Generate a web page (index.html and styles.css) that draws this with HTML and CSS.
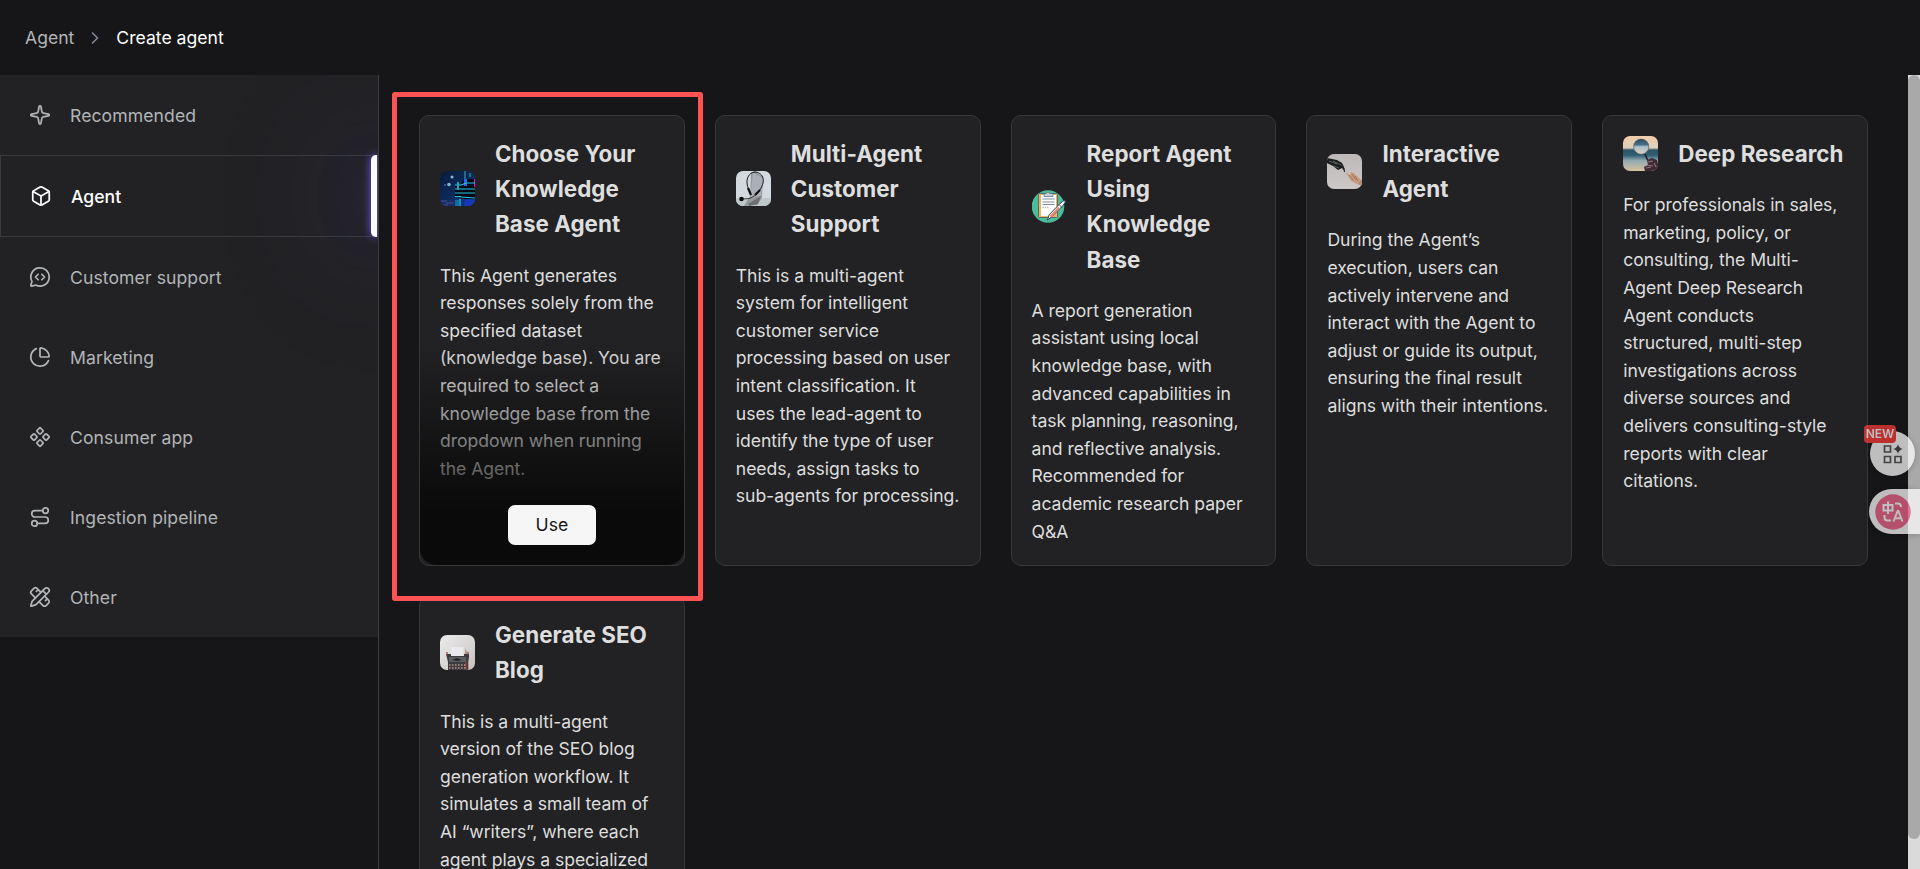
FILE: index.html
```
<!DOCTYPE html>
<html lang="en">
<head>
    <meta charset="UTF-8">
    <meta name="viewport" content="width=device-width, initial-scale=1.0">
    <title>Create agent</title>
    <link rel="stylesheet" href="styles.css">
</head>
<body>
    <header class="header">
        <a class="crumb">Agent</a>
        <svg class="chevron" viewBox="0 0 24 24"><path d="m9 18 6-6-6-6"/></svg>
        <span class="crumb current">Create agent</span>
    </header>

    <div class="page">
        <aside class="sidebar">
            <ul class="menu">
                <li class="menu-item">
                    <svg class="icon" viewBox="0 0 24 24"><path d="M11.017 2.814a1 1 0 0 1 1.966 0l1.051 5.558a2 2 0 0 0 1.594 1.594l5.558 1.051a1 1 0 0 1 0 1.966l-5.558 1.051a2 2 0 0 0-1.594 1.594l-1.051 5.558a1 1 0 0 1-1.966 0l-1.051-5.558a2 2 0 0 0-1.594-1.594l-5.558-1.051a1 1 0 0 1 0-1.966l5.558-1.051a2 2 0 0 0 1.594-1.594z"/></svg>
                    <span>Recommended</span>
                </li>
                <li class="menu-item active">
                    <svg class="icon" viewBox="0 0 24 24"><path d="M21 8a2 2 0 0 0-1-1.73l-7-4a2 2 0 0 0-2 0l-7 4A2 2 0 0 0 3 8v8a2 2 0 0 0 1 1.73l7 4a2 2 0 0 0 2 0l7-4A2 2 0 0 0 21 16Z"/><path d="m3.3 7 8.7 5 8.7-5"/><path d="M12 22V12"/></svg>
                    <span>Agent</span>
                </li>
                <li class="menu-item">
                    <svg class="icon" viewBox="0 0 24 24"><path d="m10 9-3 3 3 3"/><path d="m14 15 3-3-3-3"/><path d="M2.992 16.342a2 2 0 0 1 .094 1.167l-1.065 3.29a1 1 0 0 0 1.236 1.168l3.413-.998a2 2 0 0 1 1.099.092 10 10 0 1 0-4.777-4.719"/></svg>
                    <span>Customer support</span>
                </li>
                <li class="menu-item">
                    <svg class="icon" viewBox="0 0 24 24"><path d="M21 12c.552 0 1.005-.449.95-.998a10 10 0 0 0-8.953-8.951c-.55-.055-.998.398-.998.95v8a1 1 0 0 0 1 1z"/><path d="M21.21 15.89A10 10 0 1 1 8 2.83"/></svg>
                    <span>Marketing</span>
                </li>
                <li class="menu-item">
                    <svg class="icon" viewBox="0 0 24 24"><path d="M15.536 11.293a1 1 0 0 0 0 1.414l2.376 2.377a1 1 0 0 0 1.414 0l2.377-2.377a1 1 0 0 0 0-1.414l-2.377-2.377a1 1 0 0 0-1.414 0z"/><path d="M2.297 11.293a1 1 0 0 0 0 1.414l2.377 2.377a1 1 0 0 0 1.414 0l2.377-2.377a1 1 0 0 0 0-1.414L6.088 8.916a1 1 0 0 0-1.414 0z"/><path d="M8.916 17.912a1 1 0 0 0 0 1.415l2.377 2.376a1 1 0 0 0 1.414 0l2.377-2.376a1 1 0 0 0 0-1.415l-2.377-2.376a1 1 0 0 0-1.414 0z"/><path d="M8.916 4.674a1 1 0 0 0 0 1.414l2.377 2.376a1 1 0 0 0 1.414 0l2.377-2.376a1 1 0 0 0 0-1.414l-2.377-2.377a1 1 0 0 0-1.414 0z"/></svg>
                    <span>Consumer app</span>
                </li>
                <li class="menu-item">
                    <svg class="icon" viewBox="0 0 24 24"><circle cx="6" cy="19" r="3"/><path d="M9 19h8.500a3.500 3.500 0 0 0 0-7h-11a3.500 3.500 0 0 1 0-7H15"/><circle cx="18" cy="5" r="3"/></svg>
                    <span>Ingestion pipeline</span>
                </li>
                <li class="menu-item">
                    <svg class="icon" viewBox="0 0 24 24"><path d="M13 7 8.700 2.700a2.410 2.410 0 0 0-3.400 0L2.700 5.300a2.410 2.410 0 0 0 0 3.400L7 13"/><path d="m8 6 2-2"/><path d="m18 16 2-2"/><path d="m17 11 4.300 4.300c.94.94.94 2.460 0 3.400l-2.600 2.600c-.94.94-2.460.94-3.400 0L11 17"/><path d="M21.174 6.812a1 1 0 0 0-3.986-3.987L3.842 16.174a2 2 0 0 0-.5.830l-1.321 4.352a.5.5 0 0 0 .623.622l4.353-1.320a2 2 0 0 0 .830-.497z"/><path d="m15 5 4 4"/></svg>
                    <span>Other</span>
                </li>
            </ul>
        </aside>

        <main class="content">
            <div class="cards">
                <article class="card">
                    <div class="card-head">
                        <svg class="thumb" viewBox="0 0 35 35">
                            <defs>
                                <linearGradient id="night" x1="0" y1="0" x2="1" y2="1"><stop offset="0" stop-color="#0b1a38"/><stop offset=".5" stop-color="#0b2a58"/><stop offset="1" stop-color="#0a3f9c"/></linearGradient>
                            </defs>
                            <rect width="35" height="35" fill="url(#night)"/>
                            <path d="M24 0h2v8h-2zM29 2h2v4h-2z" fill="#1b6f86"/>
                            <circle cx="12" cy="6" r="1.500" fill="#8fb8d8"/>
                            <circle cx="9" cy="13.500" r="1.800" fill="#7fb3cf"/>
                            <circle cx="5" cy="14" r="1" fill="#3a6f9c"/>
                            <path d="M0 29h15v6H0z" fill="#1a2d62"/>
                            <path d="M1 30h6M6 32h8M2 34h6" stroke="#4a62a0" stroke-width=".7"/>
                            <path d="M15 14h7v12h-7zM21 12l4-4h10v20H21z" fill="#030817"/>
                            <path d="M24 8h3v7h-3z" fill="#2d62f0"/>
                            <path d="M34 8h1v8h-1z" fill="#f012c8"/>
                            <path d="M15 14h6M15 18h7M15 22h20M15 25.500h6M21 14l5-2h9M21 18h14M21 26l14 1" stroke="#22c9dc" stroke-width="1.100" fill="none"/>
                            <path d="M18 11v8M20 28v7" stroke="#1ba4c8" stroke-width="2"/>
                            <path d="M15 29h6v6h-6z" fill="#1483ad" opacity=".7"/>
                            <path d="M25 28l10 1v6H24z" fill="#1637b8"/>
                        </svg>
                        <h2 class="card-title">Choose Your Knowledge Base Agent</h2>
                    </div>
                    <p class="card-text">This Agent generates responses solely from the specified dataset (knowledge base). You are required to select a knowledge base from the dropdown when running the Agent.</p>
                    <div class="card-overlay">
                        <button class="use-btn" type="button">Use</button>
                    </div>
                    <div class="highlight"></div>
                </article>

                <article class="card">
                    <div class="card-head">
                        <svg class="thumb" viewBox="0 0 35 35">
                            <rect width="35" height="35" fill="#d3dadf"/>
                            <path d="M0 27h35v8H0z" fill="#bec8c9"/>
                            <path d="M15 2l4-2 8 6-1 21-5 7-13 1 6-10z" fill="#96999c"/>
                            <path d="M17 2l10 5-2 18-11 1z" fill="#aab0b4"/>
                            <path d="M12 33l13-8-3 8-9 2z" fill="#6d7072"/>
                            <path d="M13 19C8 9 13 1 19 1s13 7 4 19l-3 4" stroke="#17191b" stroke-width="1" fill="none"/>
                            <path d="M12 17l3 7M24 19l-5 5" stroke="#111" stroke-width="2.200"/>
                            <path d="M6 28q8 1 14-4" stroke="#222" stroke-width=".8" fill="none"/>
                            <circle cx="5.500" cy="28" r="2.300" fill="#0b0b0c"/>
                        </svg>
                        <h2 class="card-title">Multi-Agent Customer Support</h2>
                    </div>
                    <p class="card-text">This is a multi-agent system for intelligent customer service processing based on user intent classification. It uses the lead-agent to identify the type of user needs, assign tasks to sub-agents for processing.</p>
                </article>

                <article class="card">
                    <div class="card-head">
                        <svg class="thumb plain" viewBox="0 0 35 35">
                            <circle cx="16" cy="17.500" r="16.300" fill="#4dba9a"/>
                            <rect x="6.500" y="4.500" width="19" height="24" rx="1" fill="#f0b35c" stroke="#40586b" stroke-width=".8"/>
                            <path d="M9 6h15v16l-5 5H9z" fill="#fff"/>
                            <path d="M12 4.500h2q2-3 4 0h3v3h-9z" fill="#c5cfdc" stroke="#40586b" stroke-width=".6"/>
                            <path d="M10.500 10h12M10.500 13h12M10.500 15.500h12" stroke="#7c8ea3" stroke-width="1.200"/>
                            <path d="M10.500 18.500h6" stroke="#aab5c2" stroke-width="1.500" stroke-dasharray="1.300 1"/>
                            <path d="M15.500 31l1.500-5L28 14.500l4-3 1.500 1.300-3 4.200L19.500 28z" fill="#fff" stroke="#304b62" stroke-width="1"/>
                            <path d="M18.500 27.500L27 18.500" stroke="#f5816c" stroke-width="2.200"/>
                            <path d="M27 15.500l3 3" stroke="#304b62" stroke-width="1"/>
                        </svg>
                        <h2 class="card-title">Report Agent Using Knowledge Base</h2>
                    </div>
                    <p class="card-text">A report generation assistant using local knowledge base, with advanced capabilities in task planning, reasoning, and reflective analysis. Recommended for academic research paper Q&amp;A</p>
                </article>

                <article class="card">
                    <div class="card-head">
                        <svg class="thumb" viewBox="0 0 35 35">
                            <defs>
                                <linearGradient id="wall" x1="0" y1="0" x2="0" y2="1"><stop offset="0" stop-color="#bdb9b8"/><stop offset="1" stop-color="#cbc8c7"/></linearGradient>
                            </defs>
                            <rect width="35" height="35" fill="url(#wall)"/>
                            <path d="M0 4l10 2 5 3 2 4 1 5-3-4-4 2-5-4-6-3z" fill="#1a1d1e"/>
                            <path d="M2 7l8 3M6 7l8 4M7 12l5 2" stroke="#8b8f8f" stroke-width=".6"/>
                            <path d="M14 11q4 3 3.500 7" stroke="#252829" stroke-width="1" fill="none"/>
                            <path d="M18 18l5 3 1-3 3 1 4 4 4 4v5l-5-2-6-3-3-5z" fill="#c99a80"/>
                            <path d="M22 21l4 5M25 20l4 6M28 22l3 5" stroke="#8d5f4c" stroke-width=".6"/>
                            <path d="M31 30l4-5v7z" fill="#b08c76"/>
                        </svg>
                        <h2 class="card-title">Interactive Agent</h2>
                    </div>
                    <p class="card-text">During the Agent’s execution, users can actively intervene and interact with the Agent to adjust or guide its output, ensuring the final result aligns with their intentions.</p>
                </article>

                <article class="card">
                    <div class="card-head">
                        <svg class="thumb" viewBox="0 0 35 35">
                            <defs>
                                <linearGradient id="lake" x1="0" y1="0" x2="0" y2="1"><stop offset="0" stop-color="#f0cdaa"/><stop offset=".34" stop-color="#dccfbd"/><stop offset=".4" stop-color="#2d5366"/><stop offset=".55" stop-color="#315e73"/><stop offset=".7" stop-color="#8fa8b0"/><stop offset="1" stop-color="#d8c3a0"/></linearGradient>
                                <linearGradient id="lens" x1="0" y1="0" x2="0" y2="1"><stop offset="0" stop-color="#294b62"/><stop offset=".38" stop-color="#49718a"/><stop offset=".5" stop-color="#a9bfca"/><stop offset="1" stop-color="#ddd0c0"/></linearGradient>
                            </defs>
                            <rect width="35" height="35" fill="url(#lake)"/>
                            <circle cx="18.200" cy="10.700" r="7.600" fill="url(#lens)" stroke="#41535e" stroke-width=".6"/>
                            <path d="M22 18l2.500 6" stroke="#1c1f28" stroke-width="1.600"/>
                            <path d="M24 24l5-2 5 2 1 4v7H22l-1-4 4-2z" fill="#3e2a35"/>
                            <path d="M25 26l5-1M24 29l6 1M23 32l5-1M31 27l2 4" stroke="#94707b" stroke-width="1.100"/>
                        </svg>
                        <h2 class="card-title">Deep Research</h2>
                    </div>
                    <p class="card-text">For professionals in sales, marketing, policy, or consulting, the Multi-Agent Deep Research Agent conducts structured, multi-step investigations across diverse sources and delivers consulting-style reports with clear citations.</p>
                </article>

                <article class="card">
                    <div class="card-head">
                        <svg class="thumb" viewBox="0 0 35 35">
                            <defs>
                                <linearGradient id="desk" x1="0" y1="0" x2="1" y2="1"><stop offset="0" stop-color="#ececec"/><stop offset=".6" stop-color="#d6d3d2"/><stop offset="1" stop-color="#c9bfbb"/></linearGradient>
                            </defs>
                            <rect width="35" height="35" fill="url(#desk)"/>
                            <path d="M25 14q4 3 4 21h-3z" fill="#a5958f"/>
                            <path d="M10.500 12h13v9h-13z" fill="#e9e9ef"/>
                            <path d="M6 19h5v2h13v-2h5v3l-1 5v8H8v-8z" fill="#3c3d40"/>
                            <path d="M9 22h17v5H9z" fill="#5c5d60"/>
                            <path d="M12 25l5-2 5 2-5 1z" fill="#232427"/>
                            <path d="M7 17v3M28 17v3M26 27v8" stroke="#9b4038" stroke-width="1.200"/>
                            <path d="M9 30h17M9 33h17" stroke="#c58f80" stroke-width="1.600" stroke-dasharray="1.500 1.500"/>
                        </svg>
                        <h2 class="card-title">Generate SEO Blog</h2>
                    </div>
                    <p class="card-text">This is a multi-agent version of the SEO blog generation workflow. It simulates a small team of AI “writers”, where each agent plays a specialized</p>
                </article>
            </div>
        </main>

        <div class="scrollbar"><div class="scrollbar-thumb"></div></div>
    </div>

    <!-- Floating tools on the right edge -->
    <div class="float-tools">
        <div class="tool round">
            <span class="badge">NEW</span>
            <svg class="tool-icon" viewBox="0 0 20 20"><path d="M1.500 2h6v6h-6zM1.500 12.500h6v6h-6zM12 12.500h6v6h-6z" fill="none" stroke="#555" stroke-width="1.700"/><path d="M15 0q.8 4.200 5 5-4.200.8-5 5-.8-4.200-5-5 4.200-.8 5-5z" fill="#444"/></svg>
        </div>
        <div class="tool pill">
            <svg class="translate" viewBox="0 0 36 36"><circle cx="18" cy="18" r="17.700" fill="#f2668e"/><g fill="none" stroke="#fff" stroke-width="2"><path d="M8.500 11h9v5.500h-9zM13 7.500v12.500M20 9.500h3q3 0 3 3.500M9.500 21v2.500q0 3 3 3H16"/><path d="M18.500 27.500l4.200-10.500h.6l4.200 10.500M20 24.300h6"/></g></svg>
        </div>
    </div>
</body>
</html>
```
FILE: styles.css
```
* {
    margin: 0;
    padding: 0;
    box-sizing: border-box;
}

body {
    height: 100vh;
    display: flex;
    flex-direction: column;
    overflow: hidden;
    background-color: #161618;
    color: #dedede;
    font-family: Inter, sans-serif;
    font-size: 17.6px;
}

.header {
    display: flex;
    flex: none;
    align-items: center;
    height: 75px;
    padding-left: 25px;
    gap: 11px;
}

.crumb {
    color: #b2b5b7;
}

.crumb.current {
    color: #fff;
}

.chevron {
    width: 20px;
    height: 20px;
    fill: none;
    stroke: #7f8795;
    stroke-width: 2;
    stroke-linecap: round;
    stroke-linejoin: round;
}

.page {
    display: flex;
    flex: 1;
    min-height: 0;
}

.sidebar {
    flex: none;
    width: 379px;
    border-right: 1px solid #3d3d40;
}

.menu {
    list-style: none;
    background-color: #222224;
    overflow: hidden;
}

.menu-item {
    display: flex;
    align-items: center;
    height: 80px;
    padding-left: 29px;
    gap: 19px;
    color: #b2b5b7;
    letter-spacing: 0.08px;
}

.menu-item.active {
    position: relative;
    height: 82px;
    border: 1px solid #3b3b3e;
    color: #fff;
    font-weight: 500;
    letter-spacing: 0;
}

/* glowing bar of the selected item */
.menu-item.active::after {
    content: "";
    position: absolute;
    top: -1px;
    right: 0;
    width: 6px;
    height: 82px;
    border-radius: 5px 0 0 5px;
    background-color: #fafaff;
    box-shadow: 0 0 8px #7a5af8, 0 0 50px rgba(90, 75, 200, 0.35), 0 0 140px 30px rgba(90, 75, 180, 0.16);
}

.icon {
    width: 22px;
    height: 22px;
    fill: none;
    stroke: currentColor;
    stroke-width: 1.9;
    stroke-linecap: round;
    stroke-linejoin: round;
}

.content {
    flex: 1;
    padding: 40px 40px 0 40px;
    overflow: hidden;
}

.cards {
    display: grid;
    grid-template-columns: repeat(5, 1fr);
    gap: 30px;
}

.card {
    position: relative;
    padding: 20px;
    border: 1px solid #37373a;
    border-radius: 10px;
    background-color: #222224;
}

.card-head {
    display: flex;
    align-items: center;
    gap: 20px;
    margin-bottom: 20px;
}

.thumb {
    flex: none;
    width: 35px;
    height: 35px;
    border-radius: 7px;
}

.thumb.plain {
    border-radius: 0;
}

.card-title {
    font-size: 22.4px;
    font-weight: 700;
    line-height: 35.2px;
    letter-spacing: 0.04px;
}

.card-text {
    line-height: 27.6px;
    letter-spacing: -0.05px;
}

.card-overlay {
    position: absolute;
    left: 0;
    right: 0;
    bottom: 0;
    height: 50%;
    display: flex;
    align-items: flex-end;
    justify-content: center;
    padding-bottom: 20px;
    border-radius: 0 0 16px 16px;
    background: linear-gradient(rgba(0, 0, 0, 0), rgba(0, 0, 0, 0.7) 75%);
}

.use-btn {
    width: 88px;
    height: 40px;
    padding-bottom: 2px;
    border: none;
    border-radius: 7px;
    background-color: #f6f6f7;
    color: #161618;
    font-family: inherit;
    font-size: 17.6px;
}

.highlight {
    position: absolute;
    z-index: 2;
    top: -24px;
    left: -28px;
    width: 311px;
    height: 509px;
    border: 5px solid #ff5353;
    border-radius: 3px;
}

.scrollbar {
    flex: none;
    width: 12px;
    background-color: #dadada;
}

.scrollbar-thumb {
    height: 764px;
    border-radius: 6px;
    background-color: #a9a9a9;
}

.float-tools {
    position: fixed;
    top: 431px;
    right: 0;
    display: flex;
    flex-direction: column;
    gap: 13px;
    width: 51px;
}

.tool {
    height: 45px;
    display: flex;
    align-items: center;
    background-color: #fff;
    opacity: 0.72;
    box-shadow: 0 1px 6px rgba(0, 0, 0, 0.3);
}

.round {
    position: relative;
    width: 45px;
    margin-left: 1px;
    justify-content: center;
    border-radius: 50%;
}

.pill {
    padding-left: 6px;
    border-radius: 23px 0 0 23px;
}

.badge {
    position: absolute;
    top: -6px;
    left: -6px;
    width: 32px;
    height: 18px;
    border-radius: 4px;
    background-color: #fe3b3b;
    color: #fff;
    font-size: 12px;
    font-weight: 600;
    line-height: 18px;
    text-align: center;
}

.tool-icon {
    width: 20px;
    height: 20px;
}

.translate {
    width: 36px;
    height: 36px;
}
```
